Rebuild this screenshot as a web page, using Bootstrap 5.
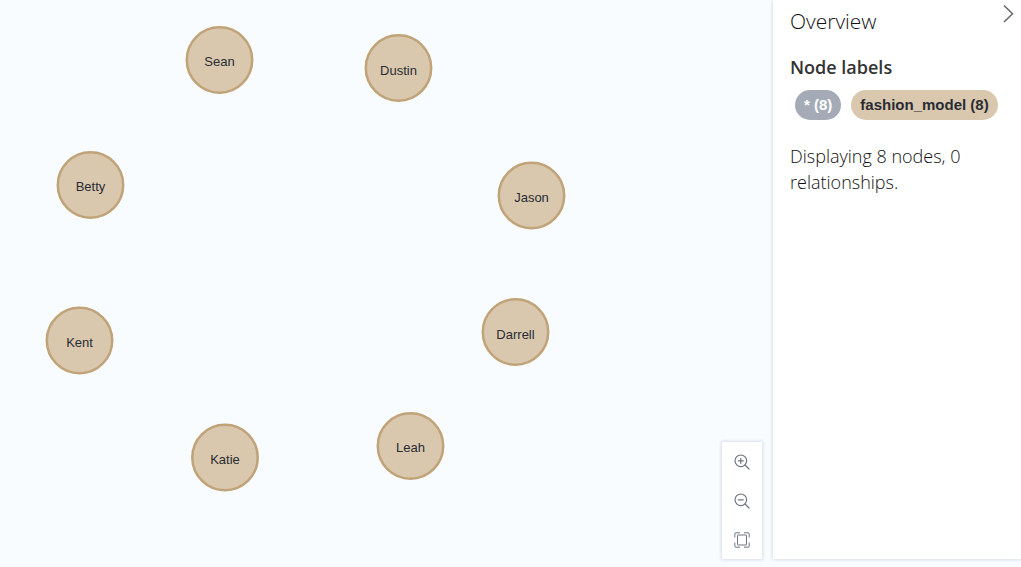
<!DOCTYPE html>
<html lang="en">
<head>
<meta charset="utf-8">
<meta name="viewport" content="width=device-width, initial-scale=1">
<title>Graph overview</title>
<link rel="stylesheet" href="https://cdn.jsdelivr.net/npm/bootstrap@5.3.0/dist/css/bootstrap.min.css">
<style>
  body { background: #f9fcff; color: #333; font-family: "Open Sans", sans-serif; }
  .graph-nodes { font-family: "Liberation Sans", Arial, sans-serif; font-size: 13px; }
  .graph-nodes circle { fill: #d9c8ae; stroke: #c0a378; stroke-width: 2.5px; }
  .graph-nodes text { fill: #2a2c34; text-anchor: middle; }
  .zoom-controls { right: 11px; bottom: 8px; width: 40px; box-shadow: 0 0 3px 1px #d5dee8; }
  .zoom-controls .btn { height: 39px; color: #6f757f; border-radius: 0; }
  .zoom-controls svg { width: 16px; height: 16px; }
  .overview-panel { width: 248px; padding: 8px 16px 8px 17px; box-shadow: 0 0 4px #c9d0d6; }
  .overview-title { font-size: 21px; line-height: 26px; font-weight: 300; color: #111; }
  .overview-heading { font-size: 18px; line-height: 26px; font-weight: 600; margin-bottom: 10px; }
  .overview-text { font-size: 18px; line-height: 26px; font-weight: 300; color: #111; margin-top: 23px; }
  .label-list { gap: 10px; padding-left: 5px; }
  .label-chip { height: 30px; padding: 0 9px; font: 700 15px/30px "Liberation Sans", Arial, sans-serif; }
  .chip-all { background: #a5abb6; color: #fff; }
  .chip-model { background: #d9c8ae; color: #2a2c34; }
  .collapse-btn { top: 3px; right: 5px; color: #666; }
</style>
</head>
<body>
<div class="d-flex vh-100 overflow-hidden">
  <main class="flex-grow-1 position-relative overflow-hidden">
    <svg class="graph-nodes d-block w-100 h-100" role="img" aria-label="Graph of eight fashion models">
      <g transform="translate(219.5 60)"><circle r="32.7"/><text y="6">Sean</text></g>
      <g transform="translate(398.5 68)"><circle r="32.7"/><text y="7">Dustin</text></g>
      <g transform="translate(90.5 185)"><circle r="32.7"/><text y="6">Betty</text></g>
      <g transform="translate(531.5 195.5)"><circle r="32.7"/><text y="6">Jason</text></g>
      <g transform="translate(79.5 340.5)"><circle r="32.7"/><text y="6">Kent</text></g>
      <g transform="translate(515.5 332)"><circle r="32.7"/><text y="7">Darrell</text></g>
      <g transform="translate(225 457.5)"><circle r="32.7"/><text y="6">Katie</text></g>
      <g transform="translate(410.5 446)"><circle r="32.7"/><text y="6">Leah</text></g>
    </svg>
    <div class="zoom-controls position-absolute d-flex flex-column bg-white">
      <button type="button" class="btn p-0 d-flex align-items-center justify-content-center" aria-label="Zoom in">
        <svg viewBox="0 0 16 16" fill="none" stroke="currentColor" stroke-width="1.2" stroke-linecap="round"><circle cx="6.8" cy="6.8" r="5.8"/><path d="M11 11l4 4M4.3 6.8h5M6.8 4.3v5"/></svg>
      </button>
      <button type="button" class="btn p-0 d-flex align-items-center justify-content-center" aria-label="Zoom out">
        <svg viewBox="0 0 16 16" fill="none" stroke="currentColor" stroke-width="1.2" stroke-linecap="round"><circle cx="6.8" cy="6.8" r="5.8"/><path d="M11 11l4 4M4.3 6.8h5"/></svg>
      </button>
      <button type="button" class="btn p-0 d-flex align-items-center justify-content-center" aria-label="Zoom to fit">
        <svg viewBox="0 0 16 16" fill="none" stroke="currentColor" stroke-width="1" stroke-linejoin="round"><rect x="3.500" y="3" width="9" height="10" rx=".5"/><path d="M.8 5.500V2q0-1.200 1.200-1.200h4M10 .8h4q1.200 0 1.200 1.200v3.500M15.200 10.500V14q0 1.200-1.200 1.200h-4M6 15.200H2q-1.200 0-1.200-1.200v-3.500"/></svg>
      </button>
    </div>
  </main>
  <aside class="overview-panel position-relative flex-shrink-0 bg-white mb-2">
    <button type="button" class="collapse-btn btn p-0 border-0 position-absolute d-flex" aria-label="Collapse panel">
      <svg width="16" height="22" viewBox="0 0 16 22" fill="none" stroke="currentColor" stroke-width="1.5"><path d="M4 2.500l8.500 8.300L4 19"/></svg>
    </button>
    <h1 class="overview-title mb-0">Overview</h1>
    <h2 class="overview-heading mt-3 pt-1">Node labels</h2>
    <div class="label-list d-flex text-nowrap">
      <button type="button" class="label-chip chip-all btn border-0 rounded-pill">* (8)</button>
      <button type="button" class="label-chip chip-model btn border-0 rounded-pill">fashion_model (8)</button>
    </div>
    <p class="overview-text mb-0">Displaying 8 nodes, 0 relationships.</p>
  </aside>
</div>
<script src="https://cdn.jsdelivr.net/npm/bootstrap@5.3.0/dist/js/bootstrap.bundle.min.js"></script>
</body>
</html>
